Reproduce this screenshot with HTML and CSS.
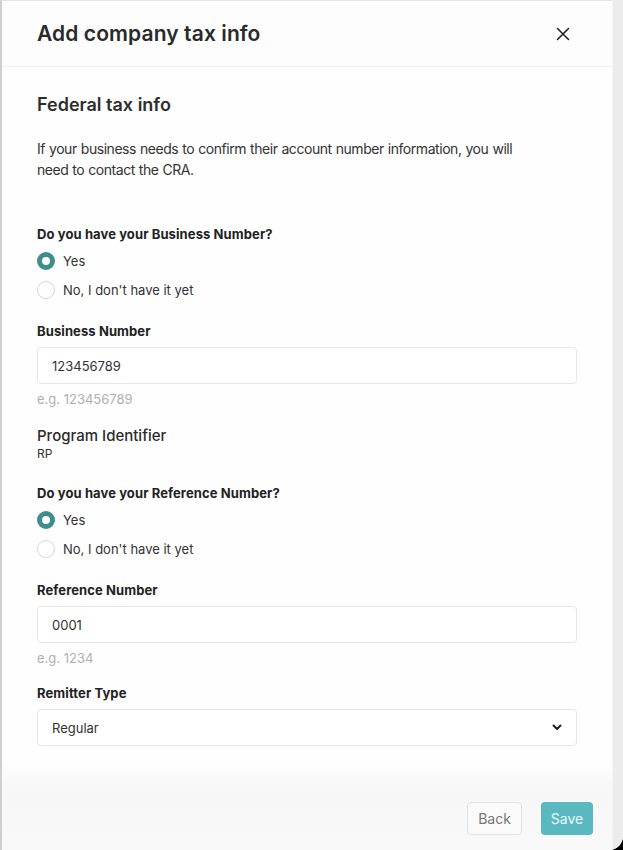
FILE: index.html
```html
<!DOCTYPE html>
<html lang="en">
<head>
<meta charset="utf-8">
<title>Add company tax info</title>
<link rel="stylesheet" href="styles.css">
</head>
<body>
<div class="window">
  <div class="modal">
    <header class="modal-header">
      <h1 class="modal-title">Add company tax info</h1>
      <button class="close-btn" aria-label="Close">
        <svg width="14" height="14" viewBox="0 0 14 14"><path d="M1.5 1.5L12.5 12.5M12.5 1.5L1.5 12.5" stroke="#222" stroke-width="1.6" stroke-linecap="round"/></svg>
      </button>
    </header>

    <main class="modal-body">
      <h2 class="section-title">Federal tax info</h2>
      <p class="intro">If your business needs to confirm their account number information, you will need to contact the CRA.</p>

      <div class="field field-first">
        <div class="label">Do you have your Business Number?</div>
        <label class="radio-row"><span class="radio checked"></span><span>Yes</span></label>
        <label class="radio-row"><span class="radio"></span><span>No, I don't have it yet</span></label>
      </div>

      <div class="field">
        <div class="label">Business Number</div>
        <div class="input">123456789</div>
        <div class="hint">e.g. 123456789</div>
      </div>

      <div class="field">
        <div class="sub-title">Program Identifier</div>
        <div class="small-value">RP</div>
      </div>

      <div class="field field-radios">
        <div class="label">Do you have your Reference Number?</div>
        <label class="radio-row"><span class="radio checked"></span><span>Yes</span></label>
        <label class="radio-row"><span class="radio"></span><span>No, I don't have it yet</span></label>
      </div>

      <div class="field">
        <div class="label">Reference Number</div>
        <div class="input">0001</div>
        <div class="hint">e.g. 1234</div>
      </div>

      <div class="field">
        <div class="label">Remitter Type</div>
        <div class="input select">
          <span>Regular</span>
          <svg width="10" height="7" viewBox="0 0 10 7"><path d="M1.5 1.5L5 5L8.5 1.5" fill="none" stroke="#1e1e1e" stroke-width="1.9" stroke-linecap="round" stroke-linejoin="round"/></svg>
        </div>
      </div>
    </main>

    <footer class="modal-footer">
      <button class="btn btn-back">Back</button>
      <button class="btn btn-save">Save</button>
    </footer>
  </div>
  <div class="scroll-track"></div>
</div>
</body>
</html>
```

FILE: styles.css
```css
* { box-sizing: border-box; }

html, body {
  margin: 0;
  padding: 0;
  background: #000;
}

body {
  font-family: Inter, "Noto Sans", sans-serif;
  color: #2b2b2b;
  width: 623px;
  height: 850px;
  overflow: hidden;
}

.window {
  display: flex;
  height: 850px;
  background: #ececec;
  border-bottom-right-radius: 14px;
  overflow: hidden;
}

.modal {
  width: 612px;
  display: flex;
  flex-direction: column;
  background: #fff;
  border-left: 2px solid #cfcfcf;
  border-top: 1px solid #e4e4e4;
}

.scroll-track {
  flex: 1;
  background: #ececec;
  border-left: 1px solid #f4f4f4;
}

/* Header */
.modal-header {
  height: 66px;
  flex: none;
  display: flex;
  align-items: center;
  justify-content: space-between;
  padding: 0 42px 0 35px;
  border-bottom: 1px solid #f1f1f1;
  background: #fdfdfd;
}

.modal-title {
  margin: 0;
  font-size: 21px;
  font-weight: 600;
  letter-spacing: 0.1px;
  color: #2a2a2a;
}

.close-btn {
  border: 0;
  background: none;
  padding: 0;
  width: 14px;
  height: 14px;
  display: flex;
}

/* Body */
.modal-body {
  flex: 1;
  padding: 27px 35px 0 35px;
  background: #fefefe;
}

.section-title {
  margin: 0;
  font-size: 18px;
  line-height: 22px;
  font-weight: 600;
  color: #2d2d2d;
}

.intro {
  margin: 22px 0 0;
  max-width: 500px;
  font-size: 14px;
  letter-spacing: -0.45px;
  word-spacing: 0.5px;
  line-height: 21px;
  color: #333;
}

.field { margin-top: 19px; }
.field-first { margin-top: 46px; }
.field-radios { margin-top: 23px; }

.label {
  font-size: 13px;
  line-height: 16px;
  font-weight: 700;
  letter-spacing: 0.1px;
  color: #222;
}

.radio-row {
  display: flex;
  align-items: center;
  gap: 8px;
  height: 29px;
  font-size: 13px;
  color: #333;
}

.field .label + .radio-row { margin-top: 4px; }

.radio {
  width: 18px;
  height: 18px;
  border-radius: 50%;
  border: 1.5px solid #d6d6d6;
  background: #fff;
  flex: none;
}

.radio.checked {
  border: 5px solid #3b8e8c;
  background: #fff;
}

.input {
  margin-top: 8px;
  height: 37px;
  border: 1px solid #e6e6e6;
  border-radius: 4px;
  background: #fff;
  display: flex;
  align-items: center;
  padding: 0 14px;
  font-size: 13px;
  color: #333;
}

.select {
  justify-content: space-between;
  padding-right: 14px;
}

.hint {
  margin-top: 7px;
  font-size: 13px;
  line-height: 16px;
  color: #b0b0b0;
}

.sub-title {
  font-size: 15px;
  line-height: 20px;
  font-weight: 500;
  color: #2b2b2b;
}

.small-value {
  font-size: 12px;
  line-height: 16px;
  color: #333;
}

/* Footer */
.modal-footer {
  flex: none;
  height: 88px;
  display: flex;
  justify-content: flex-end;
  align-items: flex-start;
  gap: 19px;
  padding: 40px 19px 0 0;
  background: linear-gradient(#fefefe, #f7f7f7 30%, #f9f9f9);
}

.btn {
  height: 33px;
  border-radius: 4px;
  font-family: inherit;
  font-size: 14px;
  padding: 0;
}

.btn-back {
  width: 55px;
  border: 1px solid #e2e2e2;
  background: #fafafa;
  color: #777;
}

.btn-save {
  width: 52px;
  border: 0;
  background: #5ab8c1;
  color: #eef9fa;
}
```
